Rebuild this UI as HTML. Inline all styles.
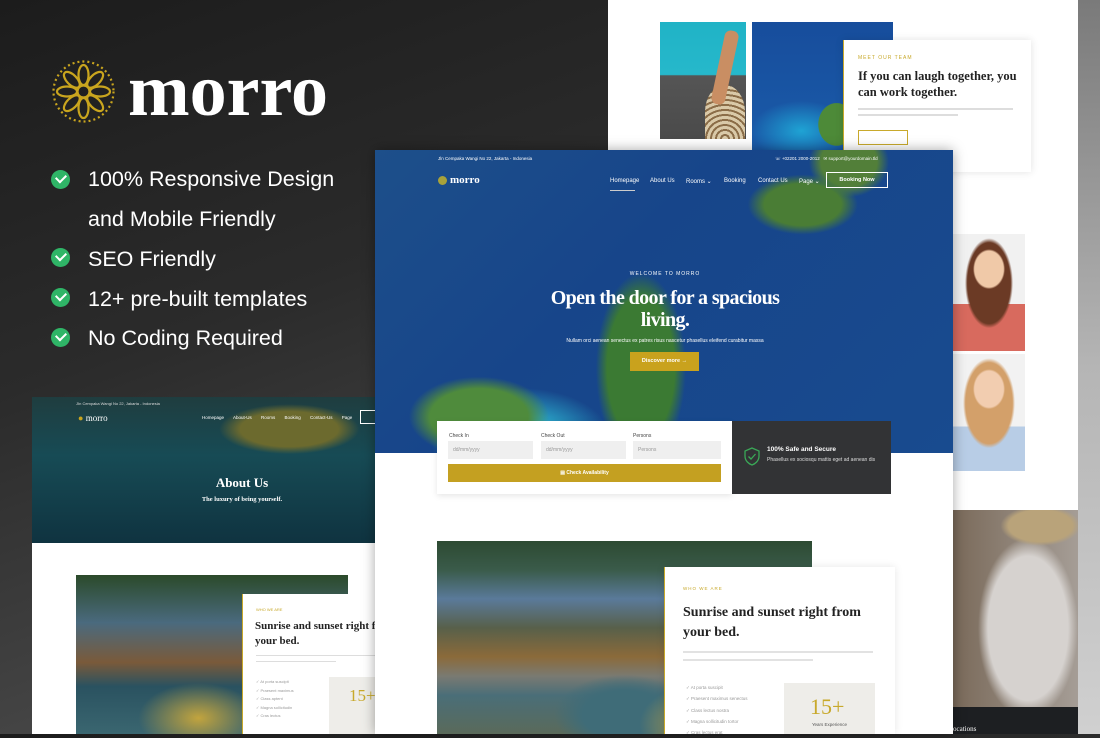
<!DOCTYPE html>
<html><head><meta charset="utf-8"><style>
*{margin:0;padding:0;box-sizing:border-box}
body{width:1100px;height:734px;overflow:hidden;position:relative;font-family:"Liberation Sans",sans-serif;background:linear-gradient(160deg,#1c1c1c 0%,#2b2b2b 35%,#444 65%,#555 100%)}
.a{position:absolute}
.serif{font-family:"Liberation Serif",serif}
.feat{position:absolute;left:88px;color:#fff;font-size:21.5px}
.chk{position:absolute;left:51px;width:19px;height:19px;border-radius:50%;background:#2fb567}
.chk:after{content:"";position:absolute;left:5px;top:4px;width:8px;height:5px;border-left:2px solid #fff;border-bottom:2px solid #fff;transform:rotate(-45deg)}
.nav{color:#fff;font-size:6px;position:absolute}
.tiny{font-size:5px;color:#999}
.line{position:absolute;height:2px;background:#ddd}
</style></head><body>
<div class="a" style="left:1078px;top:0;width:22px;height:734px;background:linear-gradient(#7a7a7a,#b5b5b5 50%,#d0d0d0)"></div>
<div class="a" style="left:608px;top:0;width:470px;height:510px;background:#fff"></div>
<div class="a" style="left:660px;top:22px;width:86px;height:117px;background:linear-gradient(#20b3c6 0%,#26b8cb 45%,#555 46%,#4a4a4a 100%)"></div>
<div class="a" style="left:705px;top:85px;width:40px;height:54px;border-radius:50% 50% 0 0;background:repeating-radial-gradient(circle at 50% 100%,#d9c9a8 0 3px,#8b6d48 3px 5px)"></div>
<div class="a" style="left:718px;top:30px;width:14px;height:75px;background:#c98e63;transform:rotate(12deg);border-radius:6px"></div>
<div class="a" style="left:752px;top:22px;width:141px;height:128px;background:radial-gradient(ellipse 30px 35px at 60% 80%,#4d8a38 60%,transparent 62%),radial-gradient(ellipse 50px 30px at 35% 85%,#1fa3d4,transparent),linear-gradient(#174d9c,#1a5ba9)"></div>
<div class="a" style="left:843px;top:40px;width:188px;height:132px;background:#fff;box-shadow:0 0 8px rgba(0,0,0,.12);border-left:1px solid #c8a92b"></div>
<div class="a" style="left:858px;top:55px;font-size:5px;color:#c8a92b;letter-spacing:1px">MEET OUR TEAM</div>
<div class="a serif" style="left:858px;top:68px;font-size:12.5px;font-weight:bold;color:#222;line-height:16px;width:170px">If you can laugh together, you can work together.</div>
<div class="line" style="left:858px;top:108px;width:155px;height:2px"></div>
<div class="line" style="left:858px;top:114px;width:100px;height:2px"></div>
<div class="a" style="left:858px;top:130px;width:50px;height:15px;border:1px solid #c8a92b"></div>
<div class="a" style="left:953px;top:234px;width:72px;height:117px;background:radial-gradient(ellipse 16px 20px at 50% 30%,#f0c9a8 90%,transparent 100%),radial-gradient(ellipse 24px 45px at 50% 42%,#6b3a25 90%,transparent),linear-gradient(#f1f1f1 60%,#d86a5e 60%)"></div>
<div class="a" style="left:953px;top:354px;width:72px;height:117px;background:radial-gradient(ellipse 16px 20px at 50% 30%,#f2cdb0 90%,transparent 100%),radial-gradient(ellipse 26px 45px at 50% 42%,#d3a06a 90%,transparent),linear-gradient(#f2f2f2 62%,#b8cde6 62%)"></div>
<div class="a" style="left:953px;top:510px;width:125px;height:197px;background:radial-gradient(ellipse 40px 20px at 70% 8%,#b9a37a 80%,transparent),radial-gradient(ellipse 50px 90px at 60% 60%,#d6d2cf 80%,transparent),linear-gradient(90deg,#7a6a5a,#a59d96)"></div>
<div class="a" style="left:953px;top:707px;width:125px;height:27px;background:#1d1f22"></div>
<div class="a serif" style="left:953px;top:725px;font-size:7px;color:#fff">ocations</div>

<svg class="a" style="left:50px;top:58px" width="67" height="67" viewBox="0 0 67 67"><g fill="none" stroke="#c9a51e" stroke-width="2.2"><circle cx="33.5" cy="33.5" r="6"/><g id="p"><ellipse cx="33.5" cy="17" rx="5" ry="10"/></g><use href="#p" transform="rotate(45 33.5 33.5)"/><use href="#p" transform="rotate(90 33.5 33.5)"/><use href="#p" transform="rotate(135 33.5 33.5)"/><use href="#p" transform="rotate(180 33.5 33.5)"/><use href="#p" transform="rotate(225 33.5 33.5)"/><use href="#p" transform="rotate(270 33.5 33.5)"/><use href="#p" transform="rotate(315 33.5 33.5)"/><circle cx="33.5" cy="33.5" r="30" stroke-dasharray="2 3"/></g></svg>
<div class="a serif" style="left:128px;top:46px;font-size:74px;color:#fff;font-weight:bold;letter-spacing:0px;line-height:90px">morro</div>
<div class="chk" style="top:170px"></div><div class="feat" style="top:167px">100% Responsive Design</div>
<div class="feat" style="top:207px">and Mobile Friendly</div>
<div class="chk" style="top:248px"></div><div class="feat" style="top:247px">SEO Friendly</div>
<div class="chk" style="top:288px"></div><div class="feat" style="top:287px">12+ pre-built templates</div>
<div class="chk" style="top:328px"></div><div class="feat" style="top:326px">No Coding Required</div>

<div class="a" style="left:32px;top:397px;width:343px;height:337px;background:#fff"></div>
<div class="a" style="left:32px;top:397px;width:343px;height:146px;background:radial-gradient(ellipse 70px 25px at 75% 22%,#6c6a2e 70%,transparent),linear-gradient(#1f3d3f,#174b55 40%,#0f3340)"></div>
<div class="a" style="left:76px;top:401px;font-size:4px;color:#ddd">JIn Cempaka Wangi No 22, Jakarta - Indonesia</div>
<div class="a serif" style="left:78px;top:413px;font-size:9px;color:#fff"><span style="color:#c9a51e">●</span> morro</div>
<div class="a" style="left:202px;top:415px;font-size:4.5px;color:#fff;word-spacing:8px">Homepage About-Us Rooms Booking Contact-Us Page</div>
<div class="a" style="left:360px;top:410px;width:15px;height:14px;border:1px solid #fff;border-right:none"></div>
<div class="a serif" style="left:190px;top:475px;width:104px;text-align:center;font-size:13px;color:#fff;font-weight:bold">About Us</div>
<div class="a serif" style="left:170px;top:496px;width:144px;text-align:center;font-size:6.5px;color:#fff;font-weight:bold">The luxury of being yourself.</div>
<div class="a" style="left:76px;top:575px;width:272px;height:159px;background:radial-gradient(ellipse 60px 35px at 45% 90%,#c2a43e,transparent),linear-gradient(#2b4a2a 0%,#4a6a7e 30%,#7a5a3a 55%,#2a5260 70%,#3a6670 100%)"></div>
<div class="a" style="left:242px;top:594px;width:133px;height:140px;background:#fff;border-left:1px solid #c8a92b"></div>
<div class="a" style="left:256px;top:607px;font-size:4px;color:#c8a92b">WHO WE ARE</div>
<div class="a serif" style="left:255px;top:619px;font-size:11px;font-weight:bold;color:#222;line-height:15px;white-space:nowrap">Sunrise and sunset right f<br>your bed.</div>
<div class="line" style="left:256px;top:655px;width:119px;height:1px"></div>
<div class="line" style="left:256px;top:661px;width:80px;height:1px"></div>
<div class="a" style="left:256px;top:678px;font-size:4px;color:#999;line-height:8.5px">✓ At porta suscipit<br>✓ Praesent maximus<br>✓ Class aptent<br>✓ Magna sollicitudin<br>✓ Cras lectus</div>
<div class="a" style="left:329px;top:677px;width:46px;height:57px;background:#eeede9"></div>
<div class="a serif" style="left:349px;top:686px;font-size:17px;color:#c8a92b">15+</div>

<div class="a" style="left:375px;top:150px;width:578px;height:584px;background:#fff;box-shadow:0 0 12px rgba(0,0,0,.35)"></div>
<div class="a" style="left:375px;top:150px;width:578px;height:303px;background:
radial-gradient(ellipse 45px 95px at 46% 72%,#3b7a33 75%,transparent 100%),
radial-gradient(ellipse 70px 40px at 18% 88%,#4f8b3c 70%,transparent),
radial-gradient(ellipse 90px 50px at 25% 95%,#2aa7c9 40%,transparent),
radial-gradient(ellipse 55px 30px at 74% 18%,#4a7d35 70%,transparent),
radial-gradient(ellipse 40px 35px at 82% 4%,#527f39 70%,transparent),
linear-gradient(135deg,#1d4f8a,#17458a 40%,#184b8f)"></div>
<div class="a" style="left:438px;top:156px;font-size:4.5px;color:#fff">Jln Cempaka Wangi No 22, Jakarta - Indonesia</div>
<div class="a" style="left:775px;top:156px;font-size:4.5px;color:#fff">☏ +02201 2000-2012 &nbsp;&nbsp;✉ support@yourdomain.tld</div>
<div class="a" style="left:438px;top:176px;width:9px;height:9px;border-radius:50%;background:#a8a23a"></div>
<div class="a serif" style="left:450px;top:174px;font-size:11px;color:#fff;font-weight:bold">morro</div>
<div class="nav" style="left:610px;top:178px">Homepage</div>
<div class="a" style="left:610px;top:190px;width:25px;height:1px;background:#ccc"></div>
<div class="nav" style="left:650px;top:178px">About Us</div>
<div class="nav" style="left:686px;top:178px">Rooms ⌄</div>
<div class="nav" style="left:724px;top:178px">Booking</div>
<div class="nav" style="left:758px;top:178px">Contact Us</div>
<div class="nav" style="left:799px;top:178px">Page ⌄</div>
<div class="a" style="left:826px;top:172px;width:62px;height:16px;border:1px solid #fff;color:#fff;font-size:5.5px;font-weight:bold;text-align:center;line-height:14px">Booking Now</div>
<div class="a" style="left:600px;top:271px;width:130px;text-align:center;font-size:5px;color:#fff;letter-spacing:1px">WELCOME TO MORRO</div>
<div class="a serif" style="left:525px;top:287px;width:280px;text-align:center;font-size:20px;color:#fff;font-weight:bold;line-height:22px;letter-spacing:-.6px">Open the door for a spacious living.</div>
<div class="a" style="left:530px;top:338px;width:270px;text-align:center;font-size:5px;color:#fff">Nullam orci aenean senectus ex patres risus nascetur phasellus eleifend curabitur massa</div>
<div class="a" style="left:630px;top:352px;width:69px;height:19px;background:#c9a21d;color:#fff;font-size:5.5px;font-weight:bold;text-align:center;line-height:19px">Discover more →</div>
<div class="a" style="left:437px;top:421px;width:295px;height:73px;background:#fff;box-shadow:0 2px 6px rgba(0,0,0,.1)"></div>
<div class="a" style="left:449px;top:433px;font-size:5px;color:#444">Check In</div>
<div class="a" style="left:541px;top:433px;font-size:5px;color:#444">Check Out</div>
<div class="a" style="left:633px;top:433px;font-size:5px;color:#444">Persons</div>
<div class="a tiny" style="left:448px;top:441px;width:85px;height:18px;background:#efefef;padding:6px 5px">dd/mm/yyyy</div>
<div class="a tiny" style="left:541px;top:441px;width:85px;height:18px;background:#efefef;padding:6px 5px">dd/mm/yyyy</div>
<div class="a tiny" style="left:633px;top:441px;width:88px;height:18px;background:#efefef;padding:6px 5px">Persons</div>
<div class="a" style="left:448px;top:464px;width:273px;height:18px;background:#c4a021;color:#fff;font-size:5px;font-weight:bold;text-align:center;line-height:18px">▤ Check Availability</div>
<div class="a" style="left:732px;top:421px;width:159px;height:73px;background:#323335"></div>
<svg class="a" style="left:744px;top:447px" width="16" height="19" viewBox="0 0 16 19"><path d="M8 1 L15 4 V9 C15 14 11 17 8 18 C5 17 1 14 1 9 V4 Z" fill="none" stroke="#3aa857" stroke-width="1.3"/><path d="M4.5 9.5 L7 12 L11.5 7" fill="none" stroke="#3aa857" stroke-width="1.3"/></svg>
<div class="a" style="left:767px;top:446px;font-size:6.5px;color:#fff;font-weight:bold">100% Safe and Secure</div>
<div class="a" style="left:767px;top:456px;font-size:5px;color:#ddd;line-height:8.5px;width:110px">Phasellus ex sociosqu mattis eget ad aenean dis</div>
<div class="a" style="left:437px;top:541px;width:375px;height:193px;background:
radial-gradient(ellipse 60px 40px at 70% 95%,#b8a048,transparent),
radial-gradient(ellipse 70px 40px at 50% 90%,#3f6c78 60%,transparent),
linear-gradient(#2d4a32 0%,#3a5b4a 15%,#5a7a9a 30%,#58604a 45%,#8b6a3a 60%,#7a7a72 70%,#4a6e78 80%,#5a6a5a 100%)"></div>
<div class="a" style="left:664px;top:567px;width:231px;height:167px;background:#fff;border-left:1px solid #c8a92b;box-shadow:0 0 8px rgba(0,0,0,.1)"></div>
<div class="a" style="left:683px;top:586px;font-size:4.5px;color:#c8a92b;letter-spacing:1px">WHO WE ARE</div>
<div class="a serif" style="left:683px;top:603px;font-size:14px;font-weight:bold;color:#222;line-height:20px;white-space:nowrap">Sunrise and sunset right from<br>your bed.</div>
<div class="line" style="left:683px;top:651px;width:190px;height:2px;background:#e2e2e2"></div>
<div class="line" style="left:683px;top:659px;width:130px;height:2px;background:#e2e2e2"></div>
<div class="a" style="left:686px;top:682px;font-size:4.5px;color:#999;line-height:11.3px">✓ At porta suscipit<br>✓ Praesent maximus senectus<br>✓ Class lectus nostra<br>✓ Magna sollicitudin tortor<br>✓ Cras lectus erat</div>
<div class="a" style="left:784px;top:683px;width:91px;height:51px;background:#eeede9"></div>
<div class="a serif" style="left:810px;top:694px;font-size:22px;color:#c8a92b">15+</div>
<div class="a" style="left:784px;top:722px;width:91px;text-align:center;font-size:4.5px;color:#555">Years Experience</div>
</body></html>
